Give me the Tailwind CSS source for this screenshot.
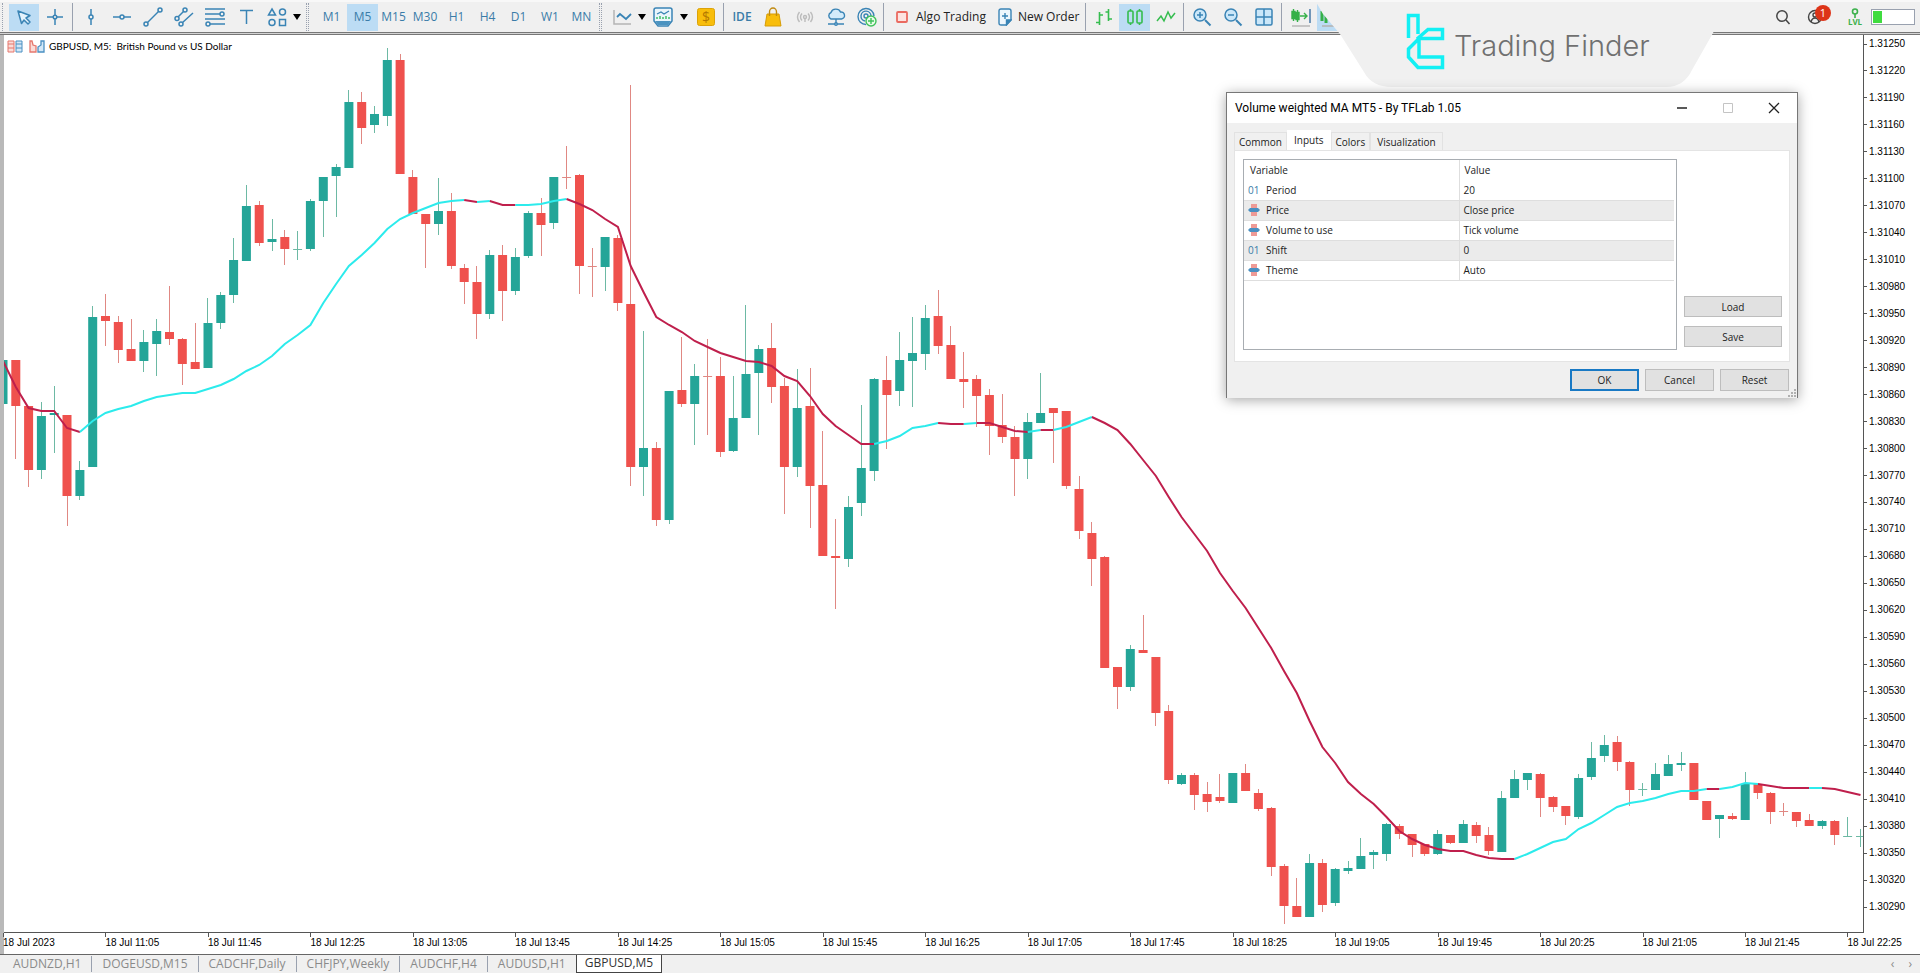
<!DOCTYPE html>
<html lang="en">
<head>
    <meta charset="UTF-8">
    <meta name="viewport" content="width=device-width, initial-scale=1.0">
    <title>GBPUSD, M5</title>
    <script src="https://cdn.jsdelivr.net/npm/@tailwindcss/browser@4"></script>
</head>
<body class="h-screen overflow-hidden flex flex-col bg-white text-black font-['Open_Sans',sans-serif]">

    <!-- Toolbar -->
    <header class="h-8 shrink-0 flex items-center bg-[#f0f0f0] border-t-2 border-[#f8f8f8] text-xs text-[#3a7ca8]">
        <div class="w-[9px] h-7 flex"><span class="ml-0.5 h-full border-l border-dotted border-gray-400"></span></div>
        <button aria-label="Cursor" class="w-[30px] h-[27px] flex items-center justify-center bg-[#bcdcf4]">
            <svg class="size-5" viewBox="0 0 20 20" fill="#e6f3fc" stroke="#3a84b5" stroke-width="1.5" stroke-linejoin="round"><path d="M4 4l12 4.500-4 2.500 4 4-2 2-4-4-2.500 3.500z"/></svg>
        </button>
        <button aria-label="Crosshair" class="w-[31px] h-[27px] flex items-center justify-center">
            <svg class="size-5" viewBox="0 0 20 20" fill="none" stroke="#3a84b5" stroke-width="1.5"><path d="M10 2v6M10 12v6M2 10h6M12 10h6"/><circle cx="10" cy="10" r="1.8"/></svg>
        </button>
        <span class="w-px h-7 bg-gray-400 mx-[2px]"></span>
        <button aria-label="Vertical line" class="w-[31px] h-[27px] flex items-center justify-center">
            <svg class="size-5" viewBox="0 0 20 20" fill="none" stroke="#3a84b5" stroke-width="1.5"><path d="M10 2v6M10 12v6"/><circle cx="10" cy="10" r="2"/></svg>
        </button>
        <button aria-label="Horizontal line" class="w-[31px] h-[27px] flex items-center justify-center">
            <svg class="size-5" viewBox="0 0 20 20" fill="none" stroke="#3a84b5" stroke-width="1.5"><path d="M1 10h7M12 10h7"/><circle cx="10" cy="10" r="2"/></svg>
        </button>
        <button aria-label="Trend line" class="w-[31px] h-[27px] flex items-center justify-center">
            <svg class="size-5" viewBox="0 0 20 20" fill="none" stroke="#3a84b5" stroke-width="1.5"><path d="M4 16L16 4"/><circle cx="3" cy="17" r="2"/><circle cx="17" cy="3" r="2"/></svg>
        </button>
        <button aria-label="Channel" class="w-[31px] h-[27px] flex items-center justify-center">
            <svg class="size-5" viewBox="0 0 20 20" fill="none" stroke="#3a84b5" stroke-width="1.5"><path d="M4 10l6-6M8 16L19 6"/><circle cx="3" cy="11.500" r="2"/><circle cx="11" cy="3" r="2"/><circle cx="7" cy="17" r="2"/></svg>
        </button>
        <button aria-label="Fibonacci" class="w-[31px] h-[27px] flex items-center justify-center">
            <svg class="size-5" viewBox="0 0 20 20" fill="none" stroke="#3a84b5" stroke-width="1.5"><path d="M0 2h20M0 7h15M0 12h20M5 17h15"/><circle cx="17" cy="7" r="2"/><circle cx="3" cy="17" r="2"/></svg>
        </button>
        <button aria-label="Text" class="w-[31px] h-[27px] flex items-center justify-center">
            <svg class="size-5" viewBox="0 0 20 20" fill="none" stroke="#3a84b5" stroke-width="1.5"><path d="M4 3.500h13M10.500 3.500v13.500"/></svg>
        </button>
        <button aria-label="Shapes" class="w-[31px] h-[27px] flex items-center justify-center">
            <svg class="size-5" viewBox="0 0 20 20" fill="none" stroke="#3a84b5" stroke-width="1.5"><path d="M5 2l3.500 6h-7zM12.500 12.500h6v6h-6z"/><circle cx="15.500" cy="5" r="3"/><circle cx="5" cy="15.500" r="3"/></svg>
        </button>
        <button aria-label="More shapes" class="w-[10px] h-[27px] flex items-center justify-center">
            <svg class="w-2 h-1.5" viewBox="0 0 8 6"><path d="M0 0h8L4 6z"/></svg>
        </button>
        <span class="w-[3px] h-7 ml-1 mr-[7px] border-x border-dotted border-gray-400"></span>

        <button class="w-[31px] h-[27px]">M1</button>
        <button class="w-[31px] h-[27px] bg-[#bcdcf4]">M5</button>
        <button class="w-[31px] h-[27px]">M15</button>
        <button class="w-[32px] h-[27px]">M30</button>
        <button class="w-[31px] h-[27px]">H1</button>
        <button class="w-[31px] h-[27px]">H4</button>
        <button class="w-[31px] h-[27px]">D1</button>
        <button class="w-[32px] h-[27px]">W1</button>
        <button class="w-[31px] h-[27px]">MN</button>
        <span class="w-[3px] h-7 ml-0.5 mr-[5px] border-x border-dotted border-gray-400"></span>

        <button aria-label="Chart type" class="w-[30px] h-[27px] flex items-center justify-center">
            <svg class="size-5" viewBox="0 0 20 20" fill="none" stroke-width="1.500"><path d="M2 3v14h17" stroke="#b4b4b4"/><path d="M5 10l3-3 6 5 5-5" stroke="#3a84b5" stroke-width="1.800"/></svg>
        </button>
        <button aria-label="Chart type list" class="w-[10px] h-[27px] flex items-center justify-center">
            <svg class="w-2 h-1.5" viewBox="0 0 8 6"><path d="M0 0h8L4 6z"/></svg>
        </button>
        <button aria-label="Indicators" class="w-[32px] h-[27px] flex items-center justify-center">
            <svg class="size-5" viewBox="0 0 20 20" fill="none"><path d="M1 3q0-2 2-2h14q2 0 2 2v11l-4 5H5l-4-5z" fill="#eaf5fc" stroke="#3a84b5" stroke-width="1.500"/><path d="M2 14h16l-3 4H5z" fill="#4b93c0"/><path d="M4 7l4-2 3 2 5-3" stroke="#3a84b5" stroke-width="1.300"/><path d="M4 12v-2M7 12V9M10 12v-2M13 12V9M16 12v-2" stroke="#3fbf6a" stroke-width="1.500"/></svg>
        </button>
        <button aria-label="Indicator list" class="w-[10px] h-[27px] flex items-center justify-center">
            <svg class="w-2 h-1.5" viewBox="0 0 8 6"><path d="M0 0h8L4 6z"/></svg>
        </button>
        <button aria-label="Quotes" class="w-[34px] h-[27px] flex items-center justify-center">
            <svg class="size-[18px]" viewBox="0 0 18 18"><rect x=".5" y=".5" width="17" height="17" rx="2" fill="#f8bd0b" stroke="#dca208"/><text x="9" y="14" text-anchor="middle" font-size="14" fill="#b47800">$</text></svg>
        </button>
        <span class="w-px h-7 bg-gray-400 mr-[3px]"></span>
        <button class="w-[30px] h-[27px] font-semibold">IDE</button>
        <button aria-label="Market" class="w-[32px] h-[27px] flex items-center justify-center">
            <svg class="size-5" viewBox="0 0 20 20"><path d="M4 7h12l2 12H2z" fill="#f8bd0b" stroke="#d79c08"/><path d="M6.500 9V5a3.500 4 0 0 1 7 0v4" fill="none" stroke="#c08a10" stroke-width="1.400"/></svg>
        </button>
        <button aria-label="Signals" class="w-[31px] h-[27px] flex items-center justify-center">
            <svg class="size-5" viewBox="0 0 20 20" fill="none" stroke="#bcbcbc" stroke-width="1.400"><circle cx="10" cy="10" r="1.500"/><path d="M7 6.500q-3 3.500 0 7M13 6.500q3 3.500 0 7M4.500 5q-4 5 0 10M15.500 5q4 5 0 10M10 12v3"/></svg>
        </button>
        <button aria-label="Cloud" class="w-[31px] h-[27px] flex items-center justify-center">
            <svg class="size-5" viewBox="0 0 20 20" fill="#d3ebfa" stroke="#3a84b5" stroke-width="1.400"><path d="M5 12a3.500 3.500 0 0 1 0-6.500 5 4.500 0 0 1 9.500-.5 3.500 3.500 0 0 1 1 7z"/><path d="M10 12v5M2 17h16"/><circle cx="10" cy="17" r="1.300"/></svg>
        </button>
        <button aria-label="VPS" class="w-[32px] h-[27px] flex items-center justify-center">
            <svg class="size-5" viewBox="0 0 20 20" fill="none" stroke="#3a84b5" stroke-width="1.400"><path d="M9 17.500A8 8 0 1 1 17 9M8 14a5 5 0 1 1 6-5"/><circle cx="9" cy="9" r="2"/><circle cx="14" cy="14" r="5" fill="#e8fbe8" stroke="#3fc25a"/><path d="M14 11v6M11 14h6" stroke="#3fc25a"/></svg>
        </button>
        <span class="w-px h-7 bg-gray-400 mr-3"></span>
        <button class="h-[27px] flex items-center gap-2 text-[#222]">
            <svg class="size-3" viewBox="0 0 12 12"><rect x="1" y="1" width="10" height="10" rx="1" fill="#fde3e0" stroke="#ea6a60" stroke-width="1.800"/></svg>
            Algo Trading
        </button>
        <button class="h-[27px] ml-3 flex items-center gap-1.5 text-[#222]">
            <svg class="w-3.5 h-[18px]" viewBox="0 0 14 18" fill="#eef7fd" stroke="#3a84b5" stroke-width="1.400"><path d="M1 3q0-2 2-2h8q2 0 2 2v9l-5 5H3q-2 0-2-2z"/><path d="M7 5v6M4 8h6"/><path d="M13 12H8.500v5z" fill="#3a84b5"/></svg>
            New Order
        </button>
        <span class="w-px h-7 bg-gray-400 ml-1.5 mr-0.5"></span>
        <button aria-label="Bars" class="w-[31px] h-[27px] flex items-center justify-center">
            <svg class="size-5" viewBox="0 0 20 20" fill="none" stroke="#35bd4f" stroke-width="1.600"><path d="M5.500 5v13M2 15.500h3.500M5.500 8H9M14.500 2v12M11.500 5h3M14.500 12H18"/></svg>
        </button>
        <button aria-label="Candles" class="w-[31px] h-[27px] flex items-center justify-center bg-[#bcdcf4]">
            <svg class="size-5" viewBox="0 0 20 20" fill="none" stroke="#35bd4f" stroke-width="1.600"><rect x="3" y="4" width="5" height="12" rx="1"/><rect x="12" y="4" width="5" height="12" rx="1"/><path d="M5.500 2v2M5.500 16v2M14.500 2v2M14.500 16v2"/></svg>
        </button>
        <button aria-label="Line" class="w-[31px] h-[27px] flex items-center justify-center">
            <svg class="size-5" viewBox="0 0 20 20" fill="none" stroke="#35bd4f" stroke-width="1.500"><path d="M1 14l4-5 3 5 4-9 3 6 4-5"/></svg>
        </button>
        <span class="w-px h-7 bg-gray-400 mx-[2px]"></span>
        <button aria-label="Zoom in" class="w-[31px] h-[27px] flex items-center justify-center">
            <svg class="size-5" viewBox="0 0 20 20" fill="#cbe7f9" stroke="#3a84b5" stroke-width="1.500"><path d="M13 13l5.500 5.500" stroke-width="2"/><circle cx="8" cy="8" r="6"/><path d="M8 5v6M5 8h6"/></svg>
        </button>
        <button aria-label="Zoom out" class="w-[31px] h-[27px] flex items-center justify-center">
            <svg class="size-5" viewBox="0 0 20 20" fill="#cbe7f9" stroke="#3a84b5" stroke-width="1.500"><path d="M13 13l5.500 5.500" stroke-width="2"/><circle cx="8" cy="8" r="6"/><path d="M5 8h6"/></svg>
        </button>
        <button aria-label="Tile windows" class="w-[31px] h-[27px] flex items-center justify-center">
            <svg class="size-5" viewBox="0 0 20 20" fill="#cbe7f9" stroke="#3a84b5" stroke-width="1.500"><rect x="2" y="2" width="16" height="16" rx="1.500"/><path d="M10 2v16M2 10h16"/></svg>
        </button>
        <span class="w-px h-7 bg-gray-400 mx-[2px]"></span>
        <button aria-label="Auto scroll" class="w-[33px] h-[27px] flex items-center justify-center">
            <svg class="size-5" viewBox="0 0 20 20" fill="none" stroke="#35b048" stroke-width="1.400"><path d="M2.500 2v12M6.500 3v12"/><path d="M1 4.500h3v7H1zM5 5.500h3v7H5z" fill="#35b048"/><path d="M9 9h7M13 6l3 3-3 3"/><path d="M19 2v14" stroke="#3a6fa0"/><path d="M1 19h18" stroke="#b4b4b4"/></svg>
        </button>
        <button aria-label="Chart shift" class="w-[31px] h-[27px] flex items-center bg-[#bcdcf4]">
            <svg class="size-5" viewBox="0 0 20 20" fill="none" stroke="#35b048" stroke-width="3"><path d="M5 4v10M9 6v10"/><path d="M5 19h14" stroke="#b4b4b4" stroke-width="1.600"/></svg>
        </button>

        <div class="ml-auto flex items-center pr-[5px]">
            <button aria-label="Search" class="w-6 flex justify-center">
                <svg class="size-4" viewBox="0 0 16 16" fill="none" stroke="#444" stroke-width="1.500"><circle cx="7" cy="7" r="5.200"/><path d="M11 11l3.500 4"/></svg>
            </button>
            <button aria-label="Account" class="relative w-10 mr-2 flex justify-center">
                <svg class="size-4" viewBox="0 0 16 16" fill="none" stroke="#444" stroke-width="1.400"><circle cx="8" cy="8" r="6.500"/><circle cx="8" cy="6" r="2"/><path d="M4 13q1-4 4-4t4 4"/></svg>
                <span class="absolute left-5 -top-1 size-4 rounded-full bg-[#dd3418] text-white text-[11px] leading-4 text-center">1</span>
            </button>
            <div class="w-6 flex flex-col items-center text-[#3cb14c]">
                <svg class="size-2.5" viewBox="0 0 10 10" fill="none" stroke="currentColor" stroke-width="1.600"><circle cx="5" cy="3.500" r="2.500"/><path d="M5 6v4"/></svg>
                <span class="text-[8px] leading-2 font-bold">LVL</span>
            </div>
            <div class="ml-1 w-11 h-4 border border-gray-400 bg-white p-px"><div class="h-full bg-[#3fdc3f]" style="width:22%"></div></div>
        </div>
    </header>

    <!-- Chart window -->
    <main class="flex-1 min-h-0 flex flex-col border-l-4 border-[#b9b9b9] font-['Liberation_Sans',Arial,sans-serif] text-[10px] leading-3">
        <div class="h-[3px] -ml-1 shrink-0 bg-[#d4d4d4] border-y border-[#777]"></div>
        <div class="flex-1 min-h-0 flex">
            <div class="relative flex-1 min-w-0 border-r border-b border-[#555]">
                <svg id="chart" class="block w-full h-full" viewBox="4 35 1859 897" preserveAspectRatio="none"></svg>
                <div class="absolute left-[3px] top-[3px] flex items-center">
                    <svg class="w-4 h-3.5 mr-1.5" viewBox="0 0 16 14" fill="none"><path d="M1 2h6v11H1zM1 5h6M1 9h6" fill="#fbdcd8" stroke="#e5776d"/><path d="M9 2h6v11H9zM9 5h6M9 9h6" fill="#d3e8f7" stroke="#4a90c2"/></svg>
                    <svg class="w-4 h-3.5 mr-1" viewBox="0 0 16 14" fill="none" stroke-width="1.300"><path d="M1 2v11h6V7L4 6 3 2z" fill="#fbdcd8" stroke="#e5776d"/><path d="M15 2v11H9V8l3-2V2z" fill="#d3e8f7" stroke="#4a90c2"/></svg>
                    <h1 class="whitespace-pre font-['Lato',sans-serif] leading-4">GBPUSD, M5:  British Pound vs US Dollar</h1>
                </div>
            </div>
            <div id="prices" class="w-14 shrink-0 flex flex-col justify-between pt-[3px] pb-5"></div>
        </div>
        <div id="times" class="h-[21px] shrink-0 flex overflow-hidden -ml-px"></div>
    </main>

    <!-- Chart tabs -->
    <footer class="h-[19px] shrink-0 flex items-center bg-[#f0f0f0] border-t border-[#666] text-xs leading-4 text-[#8a8a8a]">
        <nav class="flex items-center h-full">
            <a href="#" class="pl-[13px] pr-2.5 border-r border-gray-400">AUDNZD,H1</a>
            <a href="#" class="px-2.5 border-r border-gray-400">DOGEUSD,M15</a>
            <a href="#" class="px-2.5 border-r border-gray-400">CADCHF,Daily</a>
            <a href="#" class="px-2.5 border-r border-gray-400">CHFJPY,Weekly</a>
            <a href="#" class="px-2.5 border-r border-gray-400">AUDCHF,H4</a>
            <a href="#" class="px-2.5">AUDUSD,H1</a>
            <a href="#" class="px-2 h-full -mt-px border border-t-0 border-[#444] bg-white text-[#333]">GBPUSD,M5</a>
        </nav>
        <div class="ml-auto flex gap-3.5 pr-2">
            <button aria-label="Scroll left">‹</button>
            <button aria-label="Scroll right">›</button>
        </div>
    </footer>

    <!-- Brand banner -->
    <div class="absolute top-0 right-[190px] w-[414px] h-[88px]">
        <svg class="block w-full h-full" viewBox="0 0 414 88">
            <path d="M0 2H412L397 33 376 70Q368 87 350 87H76Q56 87 48 72L24 34 7 14z" fill="#f0f0f0"/>
            <g fill="none" stroke="#12f0f4" stroke-width="3.500">
                <path d="M92.500 38V15.500H102V34"/>
                <path d="M101 39L112 29.500H126.500V38.500H103L92.500 49V57L102 67.500H126.500V57H103V40"/>
            </g>
            <text x="138" y="56" font-family="Inter" font-weight="300" font-size="29" fill="#707070">Trading Finder</text>
        </svg>
    </div>

    <!-- Indicator settings window -->
    <section class="absolute right-[122px] top-[92px] w-[572px] bg-[#f0f0f0] border border-b-0 border-[#777] shadow-[0_2px_12px_rgba(0,0,0,0.35)] text-[10px] leading-4 text-[#222]">
        <div class="h-[30px] flex items-center bg-white pl-2 text-xs text-black">
            <h2 class="font-['Roboto',sans-serif]">Volume weighted MA MT5 - By TFLab 1.05</h2>
            <div class="ml-auto flex">
                <button aria-label="Minimize" class="w-[46px] flex justify-center"><svg class="size-3" viewBox="0 0 12 12" stroke="#222" stroke-width="1.500"><path d="M1 6h10"/></svg></button>
                <button aria-label="Maximize" class="w-[46px] flex justify-center"><svg class="size-3" viewBox="0 0 12 12" fill="none" stroke="#c4c4c4"><path d="M1.500 1.500h9v9h-9z"/></svg></button>
                <button aria-label="Close" class="w-[46px] flex justify-center"><svg class="size-3" viewBox="0 0 12 12" stroke="#222" stroke-width="1.300"><path d="M1 1l10 10M11 1L1 11"/></svg></button>
            </div>
        </div>
        <div class="px-[7px] pt-[7px]">
            <div class="flex items-end">
                <button class="h-[18px] px-1 leading-3 border border-b-0 border-[#e2e2e2]">Common</button>
                <button class="h-5 px-[7px] bg-white leading-3">Inputs</button>
                <button class="h-[18px] px-1 leading-3 border border-b-0 border-[#e2e2e2]">Colors</button>
                <button class="h-[18px] px-1.5 leading-3 border border-b-0 border-[#e2e2e2]">Visualization</button>
            </div>
            <div class="h-[212px] bg-white border border-[#e4e4e4] flex gap-[7px] p-2 pr-[7px]">
                <div class="flex-1 h-[191px] border border-[#a8adb2] pr-0.5">
                    <table class="w-full table-fixed border-collapse text-left">
                        <thead>
                            <tr class="h-5"><th class="font-normal pl-1.5">Variable</th><th class="font-normal pl-[5px] border-l border-[#dedede]">Value</th></tr>
                        </thead>
                        <tbody id="inputs"></tbody>
                    </table>
                </div>
                <div class="w-[98px] flex flex-col justify-end gap-[9px] pb-1.5">
                    <button class="h-[21px] bg-[#e1e1e1] border border-[#bdbdbd]">Load</button>
                    <button class="h-[21px] bg-[#e1e1e1] border border-[#bdbdbd]">Save</button>
                </div>
            </div>
        </div>
        <div class="flex justify-end gap-1.5 pt-[7px] pb-[7px] pr-2">
            <button class="w-[69px] h-[22px] bg-[#e1e1e1] border-2 border-[#1979c4]">OK</button>
            <button class="w-[69px] h-[22px] bg-[#e1e1e1] border border-[#bdbdbd]">Cancel</button>
            <button class="w-[69px] h-[22px] bg-[#e1e1e1] border border-[#bdbdbd]">Reset</button>
        </div>
        <svg class="absolute right-0 bottom-0 size-2.5" viewBox="0 0 10 10" fill="#b0b0b0"><path d="M7 1h2v2H7zM4 4h2v2H4zM7 4h2v2H7zM1 7h2v2H1zM4 7h2v2H4zM7 7h2v2H7z"/></svg>
    </section>

    <script>
    // one entry per 5 minute bar: [u = up / d = down, high, body top, body bottom, low]
    const bars = [
        ['u',360,360,404,404],['d',360,360,406,459],['d',406,406,470,487],['u',402,416,470,479],['u',386,413,415,453],
        ['d',415,415,496,526],['u',461,470,496,500],['u',306,317,467,467],['d',294,316,321,346],['d',316,322,350,363],
        ['d',319,349,361,361],['u',330,342,361,372],['u',319,331,344,376],['d',286,332,339,345],['d',338,339,364,385],
        ['d',323,362,369,369],['u',298,323,368,368],['u',292,295,323,329],['u',238,260,295,303],['u',185,206,261,261],
        ['d',201,205,243,246],['u',219,239,242,251],['d',230,237,249,265],['u',231,249,250,260],['u',199,201,249,251],
        ['u',177,177,201,237],['u',164,167,176,217],['u',90,102,168,168],['d',92,102,128,144],['u',106,114,125,133],
        ['u',48,60,116,126],['d',54,60,174,174],['d',170,177,214,214],['d',214,214,224,268],['u',178,211,224,235],
        ['d',193,211,266,269],['d',264,268,282,304],['d',266,282,314,339],['u',250,255,314,319],['d',245,255,291,321],
        ['u',248,257,291,295],['u',211,213,256,258],['d',198,213,225,256],['u',177,177,223,229],['d',146,177,178,189],
        ['d',174,175,266,294],['d',248,266,267,297],['u',237,237,267,291],['d',235,238,303,311],['d',85,304,467,486],
        ['u',331,448,467,496],['d',442,448,520,526],['u',391,391,520,524],['d',337,390,404,407],['u',364,376,404,445],
        ['d',339,376,377,435],['d',357,376,452,457],['u',376,418,451,452],['u',305,374,418,418],['u',345,349,373,435],
        ['d',323,348,387,403],['d',378,386,467,514],['u',369,408,467,477],['d',368,406,486,528],['d',431,485,556,556],
        ['d',519,556,558,609],['u',496,507,559,567],['u',405,468,503,516],['u',378,379,471,481],['d',356,380,395,449],
        ['u',332,360,391,406],['u',317,353,361,407],['u',305,318,354,370],['d',290,316,346,354],['d',326,345,379,379],
        ['d',352,379,382,408],['d',375,379,396,427],['d',389,395,426,455],['d',394,425,437,443],['d',426,437,459,496],
        ['u',413,422,459,479],['u',373,413,423,423],['d',408,408,413,463],['d',411,411,486,489],['d',476,489,531,539],
        ['d',522,533,559,586],['d',556,557,668,668],['d',667,667,687,709],['u',645,649,687,691],['d',615,650,653,653],
        ['d',657,657,713,726],['d',705,711,780,784],['u',773,775,784,785],['d',773,775,795,810],['d',782,794,802,812],
        ['d',774,797,801,803],['u',773,773,803,803],['d',764,773,791,791],['d',789,793,809,811],['d',807,808,867,876],
        ['d',864,866,906,924],['d',878,906,917,917],['u',854,863,917,917],['d',859,863,905,912],['u',868,869,903,906],
        ['u',861,868,871,874],['u',838,856,869,869],['u',850,852,855,869],['u',823,824,854,861],['d',824,826,834,839],
        ['d',834,834,845,857],['d',844,844,854,856],['u',830,834,854,855],['d',835,835,843,844],['u',820,824,843,843],
        ['d',822,825,836,843],['d',827,835,851,855],['u',791,798,852,852],['u',770,779,798,798],['u',773,773,780,790],
        ['d',773,774,798,817],['d',796,797,807,812],['d',806,806,816,825],['u',774,778,817,819],['u',742,758,777,780],
        ['u',735,745,756,762],['d',736,742,762,771],['d',761,762,790,806],['u',783,789,790,796],['u',763,774,790,790],
        ['u',755,764,776,776],['u',752,763,765,771],['d',763,763,800,800],['d',801,801,820,820],['u',815,815,819,838],
        ['d',813,816,819,820],['u',772,784,820,820],['d',784,784,793,799],['d',792,793,812,824],['d',803,811,812,816],
        ['d',812,812,821,827],['d',814,820,826,826],['u',820,821,826,829],['d',820,821,835,845],['u',817,836,837,837],
        ['u',829,836,837,847]
    ];

    // moving average value at each bar
    const ma = [
        361,387,408,411,411,428,432,421,413,409,406,401,397,395,393,393,389,385,379,371,365,356,344,335,325,303,284,266,255,243,
        229,219,213,208,203,201,200,202,201,205,205,205,204,201,199,204,210,219,227,266,292,317,325,332,341,347,353,357,361,362,
        366,376,381,396,414,426,435,444,444,441,436,428,426,423,424,424,423,423,427,431,432,430,430,427,422,417,423,430,444,460,
        476,497,517,534,551,573,591,608,628,648,671,693,721,747,763,782,794,804,817,831,839,845,849,851,851,855,858,859,859,854,
        848,842,839,829,823,815,807,803,801,798,794,791,791,789,789,787,783,784,786,788,788,788,788,789,792,795
    ];
    // bar index where each colour run ends, falling and rising in turn
    const turns = [6, 36, 37, 38, 40, 44, 68, 73, 75, 76, 80, 81, 82, 85, 118, 133, 134, 137, 141, 142, 145];

    const step = 12.81;
    const barX = i => 3 + i * step;

    let svg = '';
    bars.forEach(([dir, high, top, bottom, low], i) => {
        const color = dir === 'u' ? '#24a598' : '#ef514d';
        const wick = dir === 'u' ? '#6db9a4' : '#e08883';
        const x = barX(i);
        svg += `<rect x="${Math.round(x - 0.5)}" y="${high}" width="1" height="${low - high}" fill="${wick}"/>`;
        svg += `<rect x="${(x - 4.5).toFixed(1)}" y="${top}" width="9" height="${bottom - top}" fill="${bottom - top < 2 ? wick : color}"/>`;
    });
    let start = 0;
    turns.forEach((end, n) => {
        let points = '';
        for (let i = start; i <= end; i++) points += `${barX(i).toFixed(1)},${ma[i]} `;
        svg += `<polyline points="${points}" fill="none" stroke="${n % 2 ? '#2cebec' : '#bf1f4c'}" stroke-width="2"/>`;
        start = end;
    });
    document.getElementById('chart').innerHTML = svg;

    // Price axis
    let prices = '';
    for (let p = 131250; p >= 130290; p -= 30) {
        prices += `<div class="flex items-center gap-0.5"><span class="w-[3px] h-px bg-[#555]"></span>${(p / 100000).toFixed(5)}</div>`;
    }
    document.getElementById('prices').innerHTML = prices;

    // Time axis, a label every 8 bars
    let times = '';
    for (let i = 0; i < 19; i++) {
        const min = 10 * 60 + 25 + i * 40;
        const label = i === 0 ? '2023' : Math.floor(min / 60) + ':' + String(min % 60).padStart(2, '0');
        times += `<div class="shrink-0 whitespace-nowrap" style="width:${(8 * step / 19.17).toFixed(3)}%"><div class="w-px h-1 bg-[#555]"></div>18 Jul ${label}</div>`;
    }
    document.getElementById('times').innerHTML = times;

    // Indicator inputs
    const enumIcon = '<svg class="size-3" viewBox="0 0 12 12"><path d="M3 0h6v12H3z" fill="#ee9a96"/><path d="M2 4h8l2 2-2 2H2L0 6z" fill="#4a90c2"/></svg>';
    const inputs = [['01', 'Period', '20'], ['', 'Price', 'Close price'], ['', 'Volume to use', 'Tick volume'], ['01', 'Shift', '0'], ['', 'Theme', 'Auto']];
    document.getElementById('inputs').innerHTML = inputs.map(([type, name, value], i) => `
        <tr class="h-5 border-b border-[#dedede] ${i % 2 ? 'bg-[#ebebeb]' : ''}">
            <td class="pl-1"><div class="flex items-center"><span class="w-[18px] text-[#3a7ca8]">${type || enumIcon}</span>${name}</div></td>
            <td class="pl-1 border-l border-[#dedede]">${value}</td>
        </tr>`).join('');
    </script>
</body>
</html>
